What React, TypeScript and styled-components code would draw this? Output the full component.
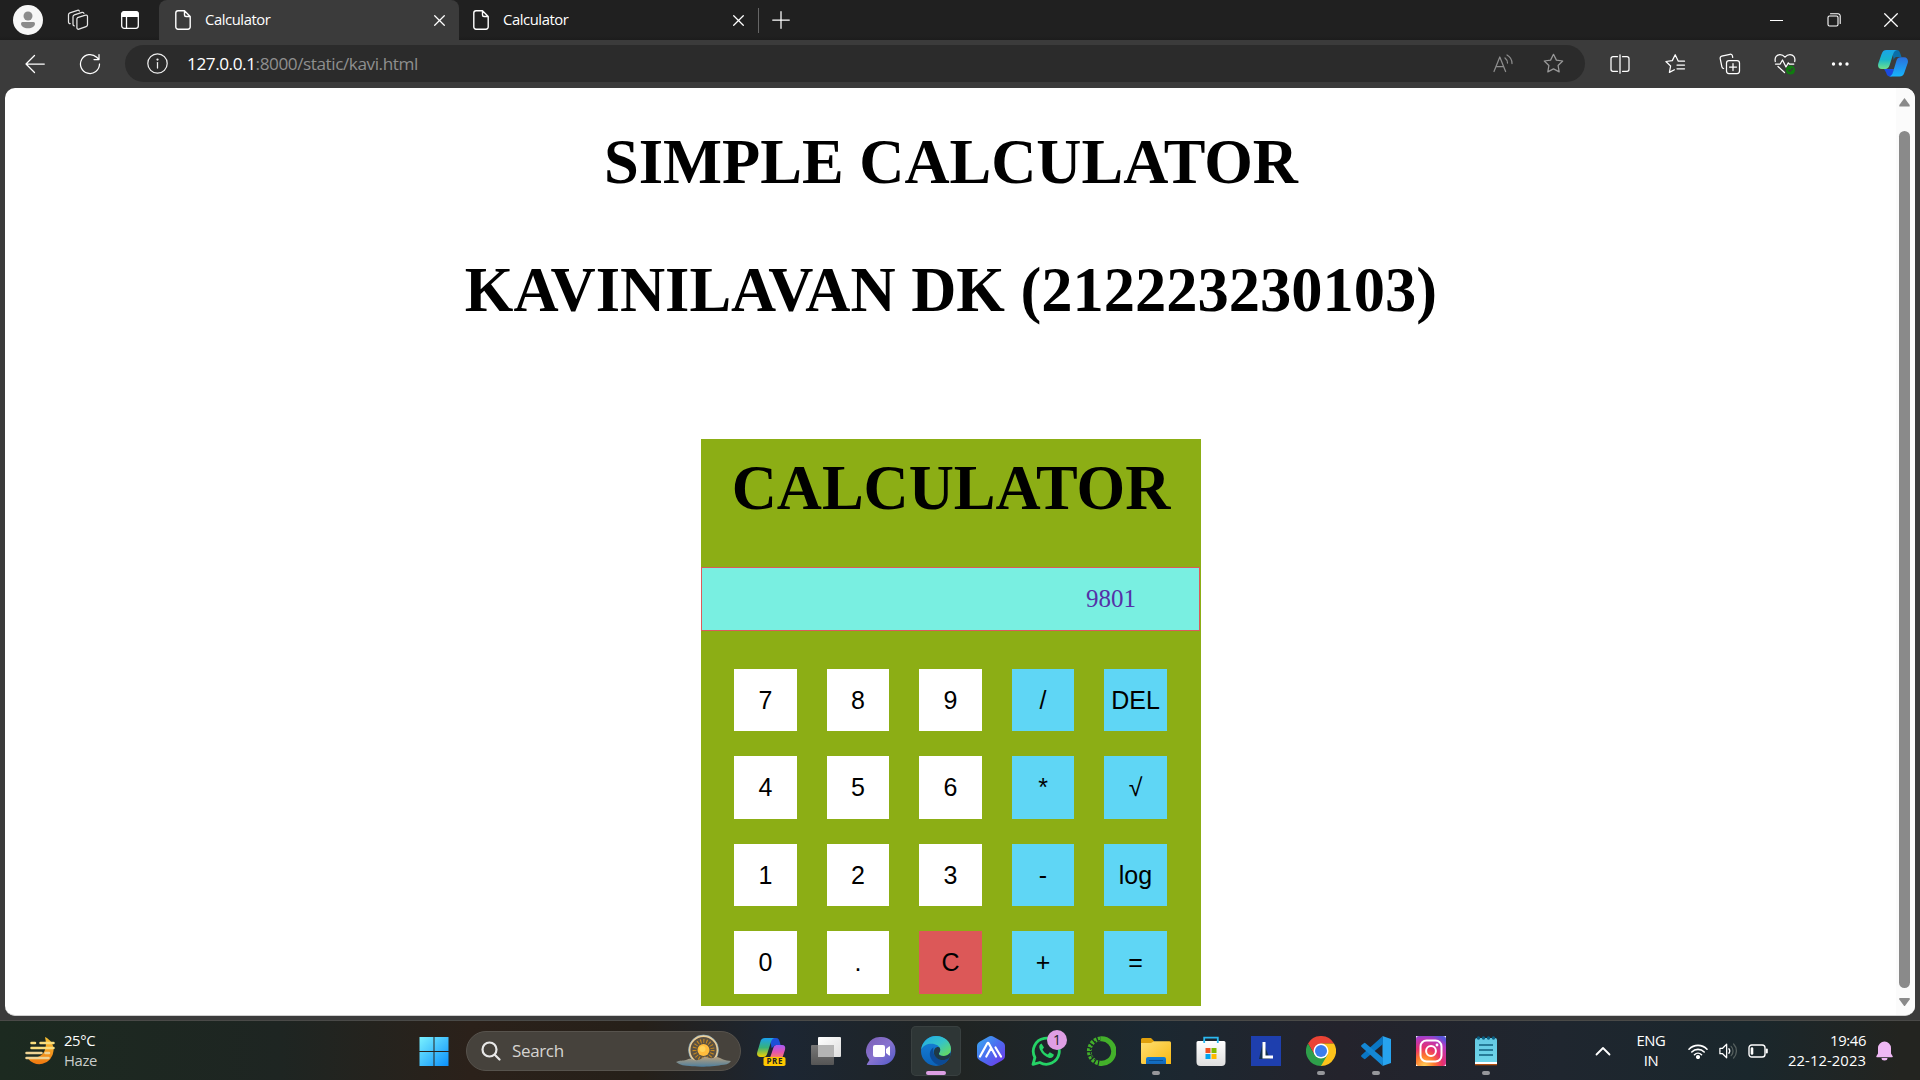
import React from "react";
import styled, { createGlobalStyle } from "styled-components";

const GlobalStyle = createGlobalStyle`
  html, body { margin: 0; padding: 0; }
  body { background: #3b3b3b; overflow: hidden; }
  * { box-sizing: border-box; }
`;

const ui = `"Open Sans", "Noto Sans", "Segoe UI", sans-serif`;

const Screen = styled.div`
  width: 1920px;
  height: 1080px;
  display: flex;
  flex-direction: column;
  background: #3b3b3b;
  font-family: ${ui};
  overflow: hidden;
`;

/* ---------- tab strip ---------- */
const TabStrip = styled.header`
  flex: none;
  height: 40px;
  display: flex;
  background: linear-gradient(#202020 36px, #1c1c1c);
  color: #fff;
`;
const StripTools = styled.div`
  width: 159px;
  display: flex;
  align-items: center;
  padding-left: 13px;
  gap: 24px;
`;
const Avatar = styled.div`
  width: 30px;
  height: 30px;
  border-radius: 50%;
  background: #f7f7f7;
  display: flex;
`;
const StripIcon = styled.div<{ $w: number }>`
  width: ${(p) => p.$w}px;
  display: flex;
  justify-content: center;
`;
const Tab = styled.div<{ $active?: boolean; $width: number }>`
  width: ${(p) => p.$width}px;
  height: 40px;
  padding: 0 14px 0 ${(p) => (p.$active ? 16 : 14)}px;
  display: flex;
  align-items: center;
  border-radius: 8px 8px 0 0;
  background: ${(p) => (p.$active ? "#3b3b3b" : "transparent")};
`;
const TabTitle = styled.span`
  flex: 1;
  margin-left: 14px;
  padding-bottom: 2px;
  font-size: 14.8px;
  letter-spacing: -0.42px;
  line-height: 20px;
  white-space: nowrap;
`;
const TabDivider = styled.div`
  width: 1px;
  height: 25px;
  margin-top: 8px;
  background: #666;
`;
const NewTab = styled.div`
  width: 43px;
  display: flex;
  align-items: center;
  justify-content: center;
`;
const WindowControls = styled.div`
  margin-left: auto;
  display: flex;
`;
const WindowButton = styled.div`
  width: 57.5px;
  height: 40px;
  display: flex;
  align-items: center;
  justify-content: center;
`;

/* ---------- toolbar ---------- */
const Toolbar = styled.nav`
  flex: none;
  height: 48px;
  padding: 5px 0 6px 15px;
  display: flex;
  gap: 15px;
`;
const ToolButton = styled.div<{ $w?: number }>`
  width: ${(p) => p.$w ?? 40}px;
  height: 37px;
  display: flex;
  align-items: center;
  justify-content: center;
`;
const AddressBar = styled.div`
  width: 1460px;
  height: 37px;
  border-radius: 19px;
  background: #2b2b2b;
  display: flex;
  align-items: center;
  padding: 0 1px 0 22px;
`;
const Url = styled.div`
  flex: 1;
  margin-left: 10px;
  padding-left: 9px;
  color: #8f8f8f;
  font-size: 17.2px;
  line-height: 24px;
  letter-spacing: -0.44px;
  white-space: nowrap;
`;
const Host = styled.span`
  color: #fff;
`;

/* ---------- page ---------- */
const Viewport = styled.div`
  flex: none;
  width: 1910px;
  height: 928px;
  margin-left: 5px;
  display: flex;
  border-radius: 10px;
  background: #fff;
  overflow: hidden;
  border-bottom: 1px solid #cfcfcf;
`;
const Page = styled.main`
  width: 1891px;
  padding-left: 1px;
  display: flex;
  flex-direction: column;
  align-items: center;
  color: #000;
`;
const Heading = styled.h1<{ $top: number }>`
  margin: ${(p) => p.$top}px 0 0;
  height: 72px;
  font: bold 62.5px/72px "Liberation Serif", "Times New Roman", serif;
  white-space: nowrap;
`;
const Panel = styled.section`
  width: 500px;
  height: 567px;
  margin-top: 113px;
  display: flex;
  flex-direction: column;
  align-items: center;
  background: #8cae15;
`;
const Display = styled.output`
  align-self: flex-start;
  width: 499px;
  height: 64px;
  margin-top: 43px;
  padding-right: 63px;
  border: 1px solid #dd5a5a;
  background: #79efe1;
  color: #5531a7;
  font: 25px/61px "Liberation Serif", "Times New Roman", serif;
  text-align: right;
`;
const Keys = styled.div`
  margin-top: 37.75px;
  margin-right: 1px;
  display: grid;
  grid-template-columns: repeat(5, 62.5px);
  grid-auto-rows: 62.5px;
  column-gap: 30px;
  row-gap: 25px;
`;
const keyColors = { digit: "#fff", op: "#5fd6f5", clear: "#dc5858" };
type Kind = keyof typeof keyColors;
const Key = styled.button<{ $kind: Kind }>`
  border: 0;
  padding: 0 0 1px;
  background: ${(p) => keyColors[p.$kind]};
  color: #000;
  font: 25px/60px "Liberation Sans", Arial, sans-serif;
  white-space: nowrap;
`;
const ScrollTrack = styled.div`
  width: 19px;
  padding: 10px 2px 9px 0;
  display: flex;
  flex-direction: column;
  align-items: center;
  background: #fbfbfb;
`;
const ScrollThumb = styled.div`
  flex: none;
  width: 11px;
  height: 857px;
  margin: 24px 0 10px;
  border-radius: 6px;
  background: #8a8a8a;
`;

/* ---------- taskbar ---------- */
const Taskbar = styled.footer`
  flex: none;
  height: 60px;
  margin-top: 4px;
  display: flex;
  align-items: center;
  color: #fff;
  border-top: 1px solid #4a4a48;
  background: linear-gradient(90deg, #1c2a20 0, #1e2522 280px, #2b211a 470px, #262019 640px,
    #1c2633 780px, #202423 960px, #1b2831 1150px, #24232c 1340px, #1f262f 1560px, #1a272c 1750px, #232420 1900px);
`;
const Weather = styled.div`
  width: 409px;
  padding-left: 24px;
  display: flex;
  align-items: center;
  gap: 8px;
`;
const Stack = styled.div<{ $align?: string; $w?: number }>`
  width: ${(p) => (p.$w ? p.$w + "px" : "auto")};
  padding-bottom: 2px;
  text-align: ${(p) => p.$align ?? "left"};
  font-size: 14.8px;
  line-height: 20px;
  letter-spacing: -0.35px;
  white-space: nowrap;
`;
const DateLine = styled.div`
  letter-spacing: 0.08px;
`;
const Muted = styled.div`
  color: #c9ccca;
`;
const TaskCell = styled.div<{ $active?: boolean }>`
  width: 50px;
  height: 50px;
  margin-right: 5px;
  padding-top: 10px;
  display: flex;
  flex-direction: column;
  align-items: center;
  border-radius: 5px;
  background: ${(p) => (p.$active ? "#2e3636" : "transparent")};
  box-shadow: ${(p) => (p.$active ? "inset 0 0 0 1px #394040" : "none")};
`;
const Indicator = styled.i<{ $active?: boolean }>`
  width: ${(p) => (p.$active ? 20 : 8)}px;
  height: 4px;
  margin-top: 5px;
  border-radius: 2px;
  background: ${(p) => (p.$active ? "#dc9fe3" : "#96979b")};
`;
const SearchBox = styled.div`
  width: 275px;
  height: 40px;
  margin: 0 5px 0 2px;
  padding: 0 8px 0 14px;
  display: flex;
  align-items: center;
  border: 1px solid #57534d;
  border-radius: 20px;
  background: #46423c;
`;
const SearchLabel = styled.span`
  flex: 1;
  margin-left: 11px;
  font-size: 17px;
  letter-spacing: -0.35px;
  color: #d6d4d1;
`;
const Tray = styled.div`
  margin-left: auto;
  display: flex;
  align-items: center;
`;
const TrayIcon = styled.div<{ $w: number }>`
  width: ${(p) => p.$w}px;
  display: flex;
  justify-content: center;
`;

type Line = { size?: number; h?: number; color?: string; sw?: number; children: React.ReactNode };
const Ico = ({ size = 20, h, color = "#fff", sw = 1.25, children }: Line) => (
  <svg width={size} height={h ?? size} viewBox={`0 0 ${size} ${h ?? size}`} fill="none" stroke={color}
    strokeWidth={sw} strokeLinecap="round" strokeLinejoin="round">
    {children}
  </svg>
);
const Art = ({ children }: { children: React.ReactNode }) => (
  <svg width="30" height="30" viewBox="0 0 30 30">{children}</svg>
);
const Grad = ({ id, from, to, mid, v }: { id: string; from: string; to: string; mid?: string; v?: boolean }) => (
  <linearGradient id={id} x1="0" y1="0" x2={v ? 0 : 1} y2="1">
    <stop offset="0" stopColor={from} />
    {mid && <stop offset=".5" stopColor={mid} />}
    <stop offset="1" stopColor={to} />
  </linearGradient>
);

const FileIcon = () => (
  <Ico size={16} h={20} sw={1.4}>
    <path d="M3 .8h6.500l5.700 5.700V17a2.200 2.200 0 0 1-2.200 2.200H3A2.200 2.200 0 0 1 .8 17V3A2.200 2.200 0 0 1 3 .8ZM9.500 .8V5a1.500 1.500 0 0 0 1.500 1.500h4.200" />
  </Ico>
);
const CloseIcon = ({ s = 11 }) => (
  <Ico size={s} h={s}><path d={`M.7.7 ${s - 0.7} ${s - 0.7}M${s - 0.7}.7.7 ${s - 0.7}`} /></Ico>
);

const keys: [string, Kind][] = [
  ["7", "digit"], ["8", "digit"], ["9", "digit"], ["/", "op"], ["DEL", "op"],
  ["4", "digit"], ["5", "digit"], ["6", "digit"], ["*", "op"], ["√", "op"],
  ["1", "digit"], ["2", "digit"], ["3", "digit"], ["-", "op"], ["log", "op"],
  ["0", "digit"], [".", "digit"], ["C", "clear"], ["+", "op"], ["=", "op"],
];

const Browser = () => (
  <>
    <TabStrip>
      <StripTools>
        <Avatar>
          <svg width="30" height="30" viewBox="0 0 30 30" fill="#8b8b8b">
            <circle cx="15" cy="11" r="4.500" />
            <path d="M9.500 17h11a1.500 1.500 0 0 1 1.500 1.500c0 3-3 4.800-7 4.800s-7-1.800-7-4.800A1.500 1.500 0 0 1 9.500 17Z" />
          </svg>
        </Avatar>
        <StripIcon $w={22}>
          <Ico size={22} h={22} color="#e6e6e6">
            <path d="m10.500 8.700 8-2.600a1.500 1.500 0 0 1 2 1.400v8.200a2 2 0 0 1-1.400 1.900l-7.200 2.600a1.500 1.500 0 0 1-2-1.400v-8.200a2 2 0 0 1 .6-1.900Z" />
            <path d="M7.200 16.800a1.500 1.500 0 0 1-1.200-1.500V7.800a2 2 0 0 1 1.400-1.900L15 3.400a1.500 1.500 0 0 1 1.900 1" />
            <path d="M3.200 14.600a1.500 1.500 0 0 1-1.700-1.500V5.700a2 2 0 0 1 1.400-1.900L10.500 1.300a1.500 1.500 0 0 1 1.800.8" />
          </Ico>
        </StripIcon>
        <StripIcon $w={34}>
          <Ico size={20} h={20} sw={1.300}>
            <rect x="1.700" y="1.700" width="16.600" height="16.600" rx="2.500" />
            <path d="M2 3.500A2 2 0 0 1 4 2h12a2 2 0 0 1 2 2v2.300H2Z" fill="#fff" />
            <path d="M6.500 6v12" />
          </Ico>
        </StripIcon>
      </StripTools>
      <Tab $active $width={300}>
        <FileIcon /><TabTitle>Calculator</TabTitle><CloseIcon />
      </Tab>
      <Tab $width={299}>
        <FileIcon /><TabTitle>Calculator</TabTitle><CloseIcon />
      </Tab>
      <TabDivider />
      <NewTab><Ico size={18} h={18}><path d="M9 .7v16.600M.7 9h16.600" /></Ico></NewTab>
      <WindowControls>
        <WindowButton><Ico size={13} h={13} sw={1}><path d="M0 6.500h13" /></Ico></WindowButton>
        <WindowButton>
          <Ico size={14} h={14} sw={1.100}>
            <rect x="1" y="3" width="10" height="10" rx="1.500" /><path d="M3.500.8H11A2.200 2.200 0 0 1 13.200 3v7.500" />
          </Ico>
        </WindowButton>
        <WindowButton><CloseIcon s={14} /></WindowButton>
      </WindowControls>
    </TabStrip>
    <Toolbar>
      <ToolButton><Ico size={20}><path d="M19.300 10H1M9.500 1.500 1 10l8.500 8.500" /></Ico></ToolButton>
      <ToolButton><Ico size={22} h={22}><path d="M20.500 11a9.500 9.500 0 1 1-2.800-6.700L20 6.500M20 1.500v5h-5" /></Ico></ToolButton>
      <AddressBar>
        <Ico size={21} h={21} color="#eee"><circle cx="10.500" cy="10.500" r="9.700" /><path d="M10.500 9.500v5.500" /><circle cx="10.500" cy="6.500" r=".5" fill="#eee" /></Ico>
        <Url><Host>127.0.0.1</Host>:8000/static/kavi.html</Url>
        <ToolButton>
          <Ico size={20} color="#8e8e8e"><path d="m1 17.500 5.800-14.500 5.800 14.500M3 12.500h7.600M12 4c1.500 1.200 2.500 3 2.500 5M14 1c3.200 1.800 5 4.700 5 8.500" /></Ico>
        </ToolButton>
        <ToolButton $w={61}>
          <Ico size={21} h={21} color="#999"><path d="m10.500 1.300 2.900 5.800 6.300.9-4.600 4.500 1.100 6.400-5.700-3-5.700 3 1.100-6.400L1.300 8l6.300-.9Z" /></Ico>
        </ToolButton>
      </AddressBar>
      <ToolButton>
        <Ico size={20} h={20}><path d="M7.500 2.700H3a2 2 0 0 0-2 2v10.600a2 2 0 0 0 2 2h4.500M12.500 2.700H17a2 2 0 0 1 2 2v10.600a2 2 0 0 1-2 2h-4.500M10 .8v18.400" /></Ico>
      </ToolButton>
      <ToolButton>
        <Ico size={22} h={21}><path d="M20.500 8.200h-6.200l-3.100-6.500-2.900 5.900-6.400.9 4.700 4.500-1.200 6.400 5-2.600M13 12h7.500M13 15.800h7.500" /></Ico>
      </ToolButton>
      <ToolButton>
        <Ico size={22} h={22}><rect x="7.500" y="7.500" width="13" height="13" rx="2.500" /><path d="M14 10.500v7M10.500 14h7M4.600 15.500a2 2 0 0 1-1.700-1.600L1.200 5.600a2 2 0 0 1 1.500-2.400l8.300-1.900a2 2 0 0 1 2.400 1.500l.3 1.500" /></Ico>
      </ToolButton>
      <ToolButton>
        <Ico size={22} h={22}>
          <path d="M1.300 8.500C.3 4 3 1.600 6 1.600c2.500 0 4 1.400 5 2.600 1-1.200 2.500-2.600 5-2.600 3 0 5.700 2.400 4.700 6.900M1.500 11h4.700L8.500 7l3.500 7 2.300-4.200 1 1.200h4.500M4 13.500l6.500 6" />
          <circle cx="16.500" cy="17" r="4.600" fill="#107c10" stroke="none" /><path d="m14.500 17 1.500 1.400 2.600-2.900" stroke="#3b3b3b" />
        </Ico>
      </ToolButton>
      <ToolButton><Ico size={18} h={18}><g fill="#fff" stroke="none"><circle cx="2.500" cy="9" r="1.700" /><circle cx="9.300" cy="9" r="1.700" /><circle cx="16" cy="9" r="1.700" /></g></Ico></ToolButton>
      <ToolButton $w={36}><CopilotEdge /></ToolButton>
    </Toolbar>
  </>
);

const CopilotEdge = () => (
  <svg width="30" height="27" viewBox="0 0 30 27">
    <defs><Grad id="ce1" from="#1ba4e8" mid="#18b5cc" to="#6fe28a" v /><Grad id="ce2" from="#2a6fdc" to="#17b4fb" v /></defs>
    <path d="M14 0h4.500c2.500 0 3.200 1.500 3.800 3.600L23.500 7h-4c-2 0-3 .5-3.800 3Z" fill="#0a6ea8" />
    <path d="M6 19h10l-2 7.500h-1.500c-2.800 0-3.700-1.500-4.400-4Z" fill="#1a4be0" />
    <path d="M8.500 0H19c-2.200.5-3.200 2-4 4.500l-3.500 11c-.8 2.300-2 3.500-4.200 3.500H4C.5 19-.5 16.500.3 13.500L3.500 4.300C4.400 1.400 5.800 0 8.500 0Z" fill="url(#ce1)" />
    <path d="M21.500 26.500H11c2.200-.5 3.200-2 4-4.500L18.500 10.500c.8-2.300 2-3.300 4.200-3.300H26c3.500 0 4.500 2.800 3.700 5.800l-3.200 9.200c-.9 2.900-2.300 4.300-5 4.300Z" fill="url(#ce2)" />
  </svg>
);

const art: Record<string, React.ReactNode> = {
  start: <><defs><linearGradient id="w1" gradientUnits="userSpaceOnUse" x1="0" y1="0" x2="30" y2="30"><stop offset="0" stopColor="#7df4ff" /><stop offset="1" stopColor="#0a8ffb" /></linearGradient></defs><path d="M.5 1h14v14H.5zM15.500 1h14v14h-14zM.5 16h14v14H.5zM15.500 16h14v14h-14z" fill="url(#w1)" /></>,
  copilot: <>
    <defs><Grad id="p1" from="#1aa0f0" mid="#37b27a" to="#f5d000" v /><Grad id="p2" from="#a45bf5" mid="#e454b0" to="#ff8a52" v /></defs>
    <path d="M14 2h6c2.500 0 3 1.500 3.600 3.600L24.600 9h-5l-4 3Z" fill="#1d4fd8" />
    <path d="M9 2h9.500c-2 .5-3 2-3.700 4.500l-3.500 11C10.500 20 9.500 21 7 21H4.500C1.500 21 .5 19 1.300 16l3-10C5 3.200 6.500 2 9 2Z" fill="url(#p1)" />
    <path d="M20 23h-8c1.500-.5 2.300-1.500 3-4l2.500-7.500C18.300 9.500 19.500 9 21.500 9h4.500c2.800 0 3.700 2 3 4.700L27 20c-.6 2-1.500 3-4 3Z" fill="url(#p2)" />
    <rect x="7.500" y="21" width="22" height="9" rx="1.800" fill="#ffc800" />
    <text x="18.800" y="28.400" fontSize="8" fontWeight="700" fontFamily="Open Sans, sans-serif" textAnchor="middle" letterSpacing=".6" fill="#222">PRE</text>
  </>,
  tasks: <><defs><Grad id="t1" from="#fff" to="#dedede" /><Grad id="t2" from="#777" to="#555" v /></defs>
    <rect x="0" y="9" width="23" height="20" rx="1" fill="url(#t2)" /><rect x="7" y="1" width="23" height="20" rx="1" fill="url(#t1)" /><path d="M7 9h16v12H7z" fill="#b4b4b4" /></>,
  chat: <><defs><Grad id="c1" from="#7b5eb4" mid="#8773cf" to="#5059c9" /></defs>
    <path d="M15.500 1a14 14 0 1 1 0 28H1.500c-.8 0-.8-.8-.4-1.300L3.500 24A14 14 0 0 1 15.500 1Z" fill="url(#c1)" /><rect x="7" y="9" width="12" height="12" rx="2" fill="#fff" /><path d="m20 13 3-2.600c.5-.3 1 0 1 .5v8.200c0 .5-.5.800-1 .5L20 17Z" fill="#fff" /></>,
  edge: <><defs><Grad id="e1" from="#20a9e8" mid="#35c3c8" to="#6fe04a" /><Grad id="e2" from="#1783da" to="#0b62b8" v /></defs>
    <circle cx="15" cy="15" r="15" fill="url(#e2)" />
    <path d="M.2 13.500C1.300 5.500 7.500 0 15 0c8.500 0 15 6 15 12.700 0 4.300-3.200 7.300-7.500 7.300-3.500 0-5-1.500-4.500-2.700.8-1.300 1.200-1.900 1.200-3.500C19.200 10 14.800 7.800 10.500 7.800 6 7.800 2 9.800.2 13.500Z" fill="url(#e1)" />
    <path d="M12.500 11.500C8.500 14 8 18.500 10 22.500c2 4 6.300 6.800 9.500 6.800 4-1.200 7.500-4 8.800-7.300-3.500 2.300-8.300 3-12 .5-4-2.800-4.500-7.500-3.800-11Z" fill="#0c4a94" />
    <path d="M18.900 12c.9 2.500-.2 3.800-.9 5.200-.5 1.300 1 2.800 4.500 2.800 2.600 0 5-1 6.500-3l.8.500c-.3 1.700-.8 3.200-1.500 4.500-3.500 2.300-8.300 3-12 .5-4-3-4.200-7.500-2.300-10 1.600-2 4-2 4.900-.5Z" fill="#22302f" fillOpacity=".85" /></>,
  alpha: <><defs><Grad id="a1" from="#38aef0" mid="#4b6cf0" to="#7333e8" /></defs>
    <path d="M15 0c1 0 2 .5 3 1l8 4.500c2 1.200 3 2.500 3 4.800v9.400c0 2.300-1 3.600-3 4.800L18 29c-2 1.200-4 1.200-6 0l-8-4.500c-2-1.200-3-2.500-3-4.800v-9.400C1 8 2 6.700 4 5.500L12 1c1-.5 2-1 3-1Z" fill="url(#a1)" />
    <path d="m4 20.500 7.200-13c.5-.9 1.100-.9 1.600 0L20 20.500M10.300 20.500l4.200-7.500M19.500 11.500l5.500 9" fill="none" stroke="#fff" strokeWidth="2.200" strokeLinecap="round" /></>,
  whatsapp: <><path d="M2 28.300 3.900 21.500A13 13 0 1 1 8.800 26.500Z" fill="none" stroke="#25d366" strokeWidth="2.800" strokeLinejoin="round" />
    <path d="M10.500 7.500c-2.300 1-3 3.200-1.500 6.200 2 4.300 5.500 7 9.300 8.200 2.500.5 4.500-1.200 4.500-3.500l-4-2.200-2 2.200c-2.500-1-4.300-2.700-5.300-5l1.500-2Z" fill="#25d366" /></>,
  loop: <><path d="M14.500 2.800A12.300 12.300 0 1 1 13 27.100" fill="none" stroke="#43b02a" strokeWidth="5.200" />
    <path d="M14.500 2.800A12.300 12.300 0 0 0 13 27.100" fill="none" stroke="#43b02a" strokeWidth="4.600" strokeDasharray="2.600 1.300" /><path d="M14 4.500A10.600 10.600 0 0 0 13 25.500" fill="none" stroke="#202830" strokeWidth="1.200" strokeDasharray="2 2.200" /></>,
  folder: <><defs><Grad id="f1" from="#ffdf72" to="#f9b913" /><Grad id="f2" from="#0f7fd8" to="#1466b8" v /></defs>
    <path d="M0 3.500A1.500 1.500 0 0 1 1.500 2H10l3 3v6H0Z" fill="#e0a00c" /><path d="M0 7h10l3-1.700h15.500A1.500 1.500 0 0 1 30 6.800V28H1.500A1.500 1.500 0 0 1 0 26.500Z" fill="url(#f1)" /><path d="M5 28v-5a2 2 0 0 1 2-2h16a2 2 0 0 1 2 2v5Z" fill="url(#f2)" /><path d="M8 24.500h14" stroke="#0b4f92" /></>,
  store: <><defs><Grad id="s1" from="#fff" to="#dfdfdf" v /></defs><path d="M8.200 7V1.700h13.600V7" fill="none" stroke="#2bb8ef" strokeWidth="1.800" />
    <path d="M.5 6.500A1.500 1.500 0 0 1 2 5h26a1.500 1.500 0 0 1 1.500 1.500V26a4 4 0 0 1-4 4h-21a4 4 0 0 1-4-4Z" fill="url(#s1)" /><path d="M8.200 7V4.500M21.800 7V4.500" stroke="#2bb8ef" strokeWidth="1.800" />
    <path d="M9.500 12h5v5h-5z" fill="#f25022" /><path d="M15.500 12h5v5h-5z" fill="#7fba00" /><path d="M9.500 18h5v5h-5z" fill="#00a4ef" /><path d="M15.500 18h5v5h-5z" fill="#ffb900" /></>,
  lapp: <><path d="M0 0h30v30H0z" fill="#1e3fae" /><path d="m12 6-4 17h11Z" fill="#12304d" /><path d="M11.500 6h3v13.500H22v3H11.500Z" fill="#fff" /></>,
  chrome: <><path d="M2 7.500a15 15 0 0 1 26 0H15v8L8.500 18.750Z" fill="#ea4335" /><path d="M28 7.500A15 15 0 0 1 15 30l-2-6 8.500-5.250L15 7.500Z" fill="#fcc21b" /><path d="M15 30A15 15 0 0 1 2 7.500l6.500 11.250h13Z" fill="#2e9e4a" /><circle cx="15" cy="15" r="7.500" fill="#fff" /><circle cx="15" cy="15" r="6" fill="#3b7ded" /></>,
  vscode: <><path d="M21.500 0 30 3v24l-8.500 3Z" fill="#27a3ef" /><path d="M22 8 4.500 22.800a1.200 1.200 0 0 1-1.600 0L.6 20.900a1.200 1.200 0 0 1 0-1.800L21.300.4 22 4Z" fill="#0a76c4" /><path d="M22 22 4.500 7.200a1.200 1.200 0 0 0-1.600 0L.6 9.100a1.200 1.200 0 0 0 0 1.800l20.700 18.700L22 26Z" fill="#1487d4" /></>,
  insta: <><defs><radialGradient id="i1" cx=".28" cy="1" r="1.100"><stop offset="0" stopColor="#ffd25a" /><stop offset=".3" stopColor="#ff7a2e" /><stop offset=".55" stopColor="#e8306d" /><stop offset=".85" stopColor="#b53ac2" /><stop offset="1" stopColor="#5a55d8" /></radialGradient></defs>
    <path d="M0 0h30v30H0z" fill="#fff" /><rect width="30" height="30" rx="3" fill="url(#i1)" /><g fill="none" stroke="#fff" strokeWidth="2"><rect x="4.500" y="4.500" width="21" height="21" rx="6" /><circle cx="15" cy="15" r="4.900" /></g><circle cx="21" cy="9" r="1.400" fill="#fff" /></>,
  notepad: <><defs><Grad id="n1" from="#63c8e2" to="#6fd6ea" v /></defs><path d="M4 4a2 2 0 0 1 2-2h18a2 2 0 0 1 2 2v23H4Z" fill="url(#n1)" /><path d="M4 26h22v2H4z" fill="#fff" /><path d="M4 28h22v1.300H4z" fill="#b5500e" />
    <g fill="#0c5f82"><circle cx="7.500" cy="2" r="1.700" /><circle cx="12.500" cy="2" r="1.700" /><circle cx="17.500" cy="2" r="1.700" /><circle cx="22.500" cy="2" r="1.700" /></g><path d="M8 9h14M8 14h14M8 19h14" stroke="#12607f" strokeWidth="1.600" /></>,
};

const BadgeHolder = styled.div`
  position: relative;
  height: 30px;
`;
const Badge = styled.span`
  position: absolute;
  left: 16px;
  top: -6px;
  width: 20px;
  height: 20px;
  border-radius: 50%;
  background: #df9ee4;
  color: #222;
  font-size: 14px;
  line-height: 20px;
  text-align: center;
`;

const apps: { id: string; state?: "open" | "active"; badge?: string }[] = [
  { id: "copilot" }, { id: "tasks" }, { id: "chat" }, { id: "edge", state: "active" }, { id: "alpha" },
  { id: "whatsapp", badge: "1" }, { id: "loop" }, { id: "folder", state: "open" }, { id: "store" },
  { id: "lapp" }, { id: "chrome", state: "open" }, { id: "vscode", state: "open" }, { id: "insta" },
  { id: "notepad", state: "open" },
];

const SunArt = () => (
  <svg width="56" height="34" viewBox="0 0 56 34">
    <defs><Grad id="m1" from="#b9a07c" to="#4f7f9e" v /></defs>
    <circle cx="27.500" cy="16" r="14" fill="#5b5142" stroke="#f0cf94" strokeWidth="1.800" />
    <circle cx="27.500" cy="16" r="15" fill="none" stroke="#86b7d8" strokeWidth=".6" />
    <circle cx="27.500" cy="16" r="9" fill="none" stroke="#c98a1e" strokeWidth="4" strokeDasharray="1 2" />
    <circle cx="27.500" cy="16" r="6" fill="#ffbc3c" />
    <circle cx="26.500" cy="15" r="3" fill="#ffd35a" />
    <path d="M0 28c4-2 7-1 10-2s5-2 8 0c4 1 7-1 10-3 2-1 4 1 6 1 3 1 4-1 7-1 4 1 8 4 14 4-2 3-6 4-10 4-8 2-26 2-31 1-5 0-10-1-14-4Z" fill="url(#m1)" />
  </svg>
);

export default function App() {
  return (
    <Screen>
      <GlobalStyle />
      <Browser />
      <Viewport>
        <Page>
          <Heading $top={38}>SIMPLE CALCULATOR</Heading>
          <Heading $top={56}>KAVINILAVAN DK (212223230103)</Heading>
          <Panel>
            <Heading $top={13}>CALCULATOR</Heading>
            <Display>9801</Display>
            <Keys>
              {keys.map(([label, kind]) => <Key key={label} $kind={kind}>{label}</Key>)}
            </Keys>
          </Panel>
        </Page>
        <ScrollTrack>
          <svg width="11" height="9" viewBox="0 0 11 9"><path d="M5.500 0 11 7.500V9H0V7.500Z" fill="#8a8a8a" /></svg>
          <ScrollThumb />
          <svg width="11" height="9" viewBox="0 0 11 9"><path d="M5.500 9 11 1.500V0H0v1.500Z" fill="#8a8a8a" /></svg>
        </ScrollTrack>
      </Viewport>
      <Taskbar>
        <Weather>
          <svg width="32" height="30" viewBox="0 0 32 30">
            <defs><Grad id="h1" from="#f7c334" to="#f0780f" v /></defs>
            <path d="M21 1c6 3 9 8 8.500 14A14.200 14.200 0 0 1 3 21c8 2 15 0 17.500-6 2-5 1.500-10 .5-14Z" fill="url(#h1)" />
            <g stroke="#f8dd7c" strokeWidth="2.500" strokeLinecap="round"><path d="M7.500 7h3.500M16.500 7h13M7.500 12h22" /><path d="M2.500 17h15M21.500 17h3.500M2.500 22h22" stroke="#efd394" /></g>
          </svg>
          <Stack>25°C<Muted>Haze</Muted></Stack>
        </Weather>
        <TaskCell><Art>{art.start}</Art></TaskCell>
        <SearchBox>
          <Ico size={20} h={20} sw={2.200} color="#e8e8e8"><circle cx="8.500" cy="8.500" r="7" /><path d="m13.800 13.800 4.700 4.700" /></Ico>
          <SearchLabel>Search</SearchLabel>
          <SunArt />
        </SearchBox>
        {apps.map((a) => (
          <TaskCell key={a.id} $active={a.state === "active"}>
            <BadgeHolder>
              <Art>{art[a.id]}</Art>
              {a.badge && <Badge>{a.badge}</Badge>}
            </BadgeHolder>
            {a.state && <Indicator $active={a.state === "active"} />}
          </TaskCell>
        ))}
        <Tray>
          <TrayIcon $w={44}><Ico size={16} h={10} sw={1.800}><path d="m1.500 8.500 6.500-6.500 6.500 6.500" /></Ico></TrayIcon>
          <Stack $w={52} $align="center">ENG<br />IN</Stack>
          <TrayIcon $w={42}>
            <Ico size={20} h={16} sw={1.600}><path d="M1 6.200a12.500 12.500 0 0 1 18 0M3.800 9a8.700 8.700 0 0 1 12.400 0M6.500 11.700a5 5 0 0 1 7 0" /><circle cx="10" cy="14" r="1.300" fill="#fff" /></Ico>
          </TrayIcon>
          <TrayIcon $w={18}>
            <Ico size={20} h={18} sw={1.400}><path d="M1 6h3l4.500-4.500v15L4 12H1ZM11 6.500a4 4 0 0 1 0 5" /><path d="M13.500 3.800a7.500 7.500 0 0 1 0 10.400M16.200 1.200a11.300 11.300 0 0 1 0 15.600" stroke="#56605f" /></Ico>
          </TrayIcon>
          <TrayIcon $w={42}>
            <Ico size={20} h={14} sw={1.400}><rect x="1" y="1" width="16" height="12" rx="2.800" /><path d="M4 4.500v5" strokeWidth="2.600" /><path d="M18.800 5.500v3" strokeWidth="2" /></Ico>
          </TrayIcon>
          <Stack $w={87} $align="right">19:46<DateLine>22-12-2023</DateLine></Stack>
          <TrayIcon $w={37}>
            <svg width="17" height="20" viewBox="0 0 17 20" fill="#efb8f4"><path d="M8.500.5A6.500 6.500 0 0 1 15 7v5.500l1.700 2.800c.2.500 0 .9-.5.900H.8c-.5 0-.7-.4-.5-.9L2 12.500V7A6.500 6.500 0 0 1 8.500.5ZM5.500 17h6a3 2.500 0 0 1-6 0Z" /></svg>
          </TrayIcon>
          <TrayIcon $w={17} />
        </Tray>
      </Taskbar>
    </Screen>
  );
}
